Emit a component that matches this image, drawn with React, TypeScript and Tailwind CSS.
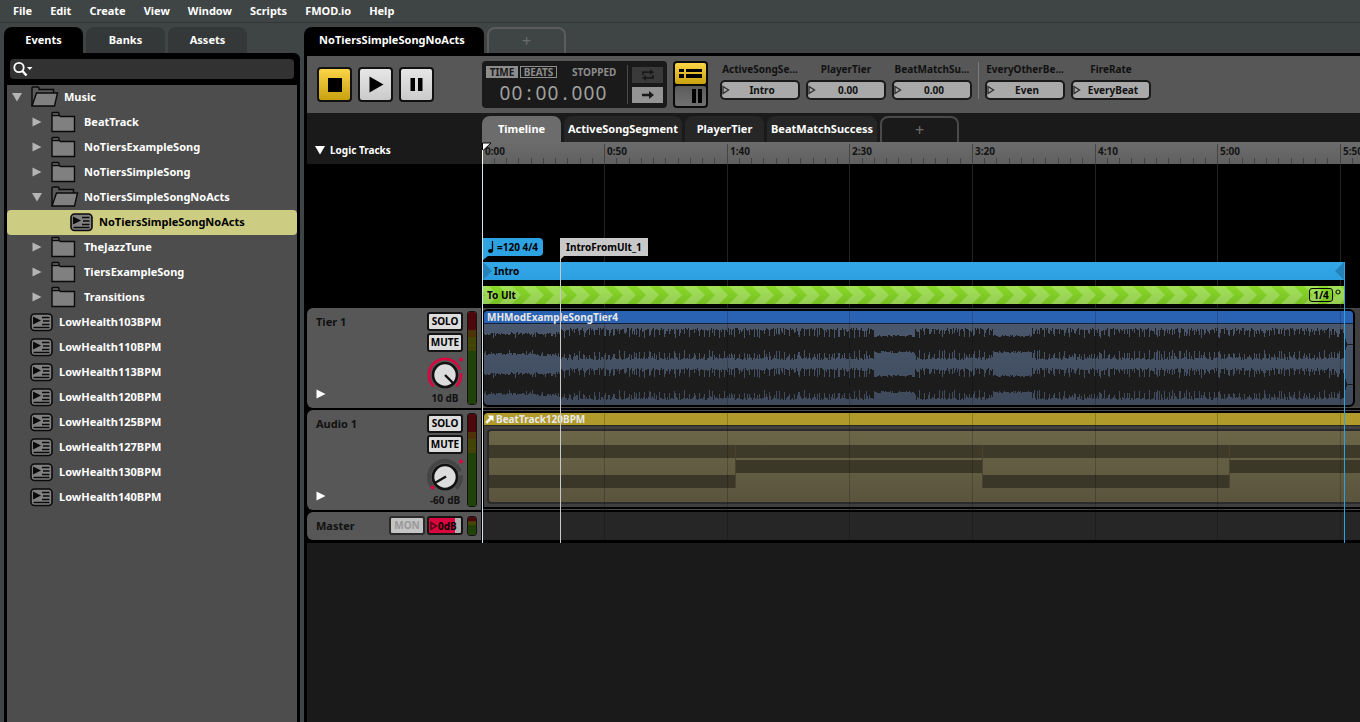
import type { ReactNode } from "react";
import clsx from "clsx";

const MENUS = ["File", "Edit", "Create", "View", "Window", "Scripts", "FMOD.io", "Help"];

type Item = { name: string; kind: "closed" | "open" | "event"; pad: string; selected?: boolean };

const TREE: Item[] = [
  { name: "Music", kind: "open", pad: "pl-1" },
  { name: "BeatTrack", kind: "closed", pad: "pl-6" },
  { name: "NoTiersExampleSong", kind: "closed", pad: "pl-6" },
  { name: "NoTiersSimpleSong", kind: "closed", pad: "pl-6" },
  { name: "NoTiersSimpleSongNoActs", kind: "open", pad: "pl-6" },
  { name: "NoTiersSimpleSongNoActs", kind: "event", pad: "pl-[63px]", selected: true },
  { name: "TheJazzTune", kind: "closed", pad: "pl-6" },
  { name: "TiersExampleSong", kind: "closed", pad: "pl-6" },
  { name: "Transitions", kind: "closed", pad: "pl-6" },
  ...[103, 110, 113, 120, 125, 127, 130, 140].map(
    (bpm): Item => ({ name: `LowHealth${bpm}BPM`, kind: "event", pad: "pl-[23px]" })
  ),
];

// timeline scale
const PX_PER_SEC = 2.452;
const MARKS = [
  { t: 0, label: "0:00" },
  { t: 50, label: "0:50" },
  { t: 100, label: "1:40" },
  { t: 150, label: "2:30" },
  { t: 200, label: "3:20" },
  { t: 250, label: "4:10" },
  { t: 300, label: "5:00" },
  { t: 350, label: "5:50" },
];
const toPx = (t: number) => Math.floor(t * PX_PER_SEC);

function Tri({ dir, className }: { dir: "right" | "down"; className?: string }) {
  return (
    <svg width="10" height="10" viewBox="0 0 10 10" className={clsx("shrink-0", className)} fill="currentColor">
      {dir === "right" ? <path d="M0.5 0.5L9.5 5L0.5 9.5z" /> : <path d="M0 1h10L5 9.5z" />}
    </svg>
  );
}

function FolderClosed() {
  return (
    <svg width="26" height="22" viewBox="0 0 26 22" className="shrink-0">
      <path d="M1 4V2.5Q1 1.5 2 1.5H7Q8 1.5 8 2.5V4" fill="#6b6b6b" stroke="#0a0a0a" strokeWidth="1.4" />
      <path d="M1 4.5H8L9.5 5.5H23.5V20.5H1z" fill="#808080" stroke="#0a0a0a" strokeWidth="1.4" />
    </svg>
  );
}

function FolderOpen() {
  return (
    <svg width="28" height="22" viewBox="0 0 28 22" className="shrink-0">
      <path d="M1 20V2Q1 1 2 1H7Q8 1 8 2V3.5H22.5V7" fill="#5a5a5a" stroke="#0a0a0a" strokeWidth="1.4" />
      <path d="M5.5 7L26.5 7L23.5 20H1z" fill="#808080" stroke="#0a0a0a" strokeWidth="1.4" />
    </svg>
  );
}

function EventIcon() {
  return (
    <svg width="23" height="19" viewBox="0 0 23 19" className="shrink-0">
      <rect x="1" y="1" width="21" height="16.5" rx="3.5" fill="#808080" stroke="#0a0a0a" strokeWidth="1.6" />
      <path d="M3 3.5L11 7.5L3 11.5z" fill="#0a0a0a" />
      <path d="M12 4.5H19.5M13 8H19.5M12 11.5H19.5M3.5 14.5H19.5" stroke="#0a0a0a" strokeWidth="1.3" />
    </svg>
  );
}

function TreeRow({ item }: { item: Item }) {
  const isEvent = item.kind === "event";
  return (
    <li>
      <button
        className={clsx(
          "flex h-[25px] w-full items-center pb-px text-left",
          item.pad,
          item.selected ? "rounded-sm bg-[#cccc83] text-black" : "text-white"
        )}
      >
        {isEvent ? (
          <EventIcon />
        ) : (
          <>
            <Tri dir={item.kind === "open" ? "down" : "right"} className="mr-[9px] ml-px text-[#b4b4b4]" />
            {item.kind === "open" ? <FolderOpen /> : <FolderClosed />}
          </>
        )}
        <span className={clsx(isEvent ? "ml-1.5" : item.kind === "open" ? "ml-[5px]" : "ml-[7px]")}>{item.name}</span>
      </button>
    </li>
  );
}

function Sidebar() {
  return (
    <aside className="flex w-[296px] shrink-0 flex-col">
      <div className="flex gap-[3px]">
        {["Events", "Banks", "Assets"].map((t, i) => (
          <button key={t} className={clsx("h-[26px] w-[79px] rounded-t-lg", i === 0 ? "bg-black" : "bg-[#343838]")}>
            {t}
          </button>
        ))}
      </div>
      <div className="flex min-h-0 flex-1 flex-col rounded-tr-md bg-black px-[3px] pt-1.5">
        <label className="mx-[3px] mb-1.5 flex h-5 items-center rounded-sm bg-[#323232] pl-[3px]">
          <svg width="20" height="16" viewBox="0 0 20 16" className="shrink-0" fill="none" stroke="#fff">
            <circle cx="6" cy="6.5" r="4.7" strokeWidth="1.8" />
            <path d="M9.5 10L13.5 14.5" strokeWidth="2.4" />
            <path d="M14 6h5.5L16.7 9z" fill="#fff" stroke="none" />
          </svg>
          <input aria-label="Search events" className="min-w-0 flex-1 bg-transparent px-1 outline-none" />
        </label>
        <ul className="flex-1 bg-[#4d4d4d]">
          {TREE.map((item, i) => (
            <TreeRow key={i} item={item} />
          ))}
        </ul>
      </div>
    </aside>
  );
}

function TransportButton({ label, active, children }: { label: string; active?: boolean; children: ReactNode }) {
  return (
    <button
      aria-label={label}
      className={clsx(
        "h-[35px] w-[35px] rounded-sm border-2 border-[#111] bg-linear-to-b",
        active ? "from-[#fbd545] to-[#c9a20c]" : "from-[#e6e6e6] to-[#cbcbcb]"
      )}
    >
      <svg viewBox="0 0 31 31" fill="#000">
        {children}
      </svg>
    </button>
  );
}

function Param({ name, value }: { name: string; value: string }) {
  return (
    <label className="flex w-20 flex-col items-center gap-1 text-[10px] leading-[14px] text-[#111]">
      <span className="whitespace-nowrap">{name}</span>
      <span className="flex h-5 w-20 items-center rounded-[5px] border-2 border-[#1a1a1a] bg-[#a9a9a9]">
        <svg width="8" height="10" viewBox="0 0 8 10" className="shrink-0">
          <path d="M1 1.5L6.5 5L1 8.5z" fill="none" stroke="#333" strokeWidth="1.4" />
        </svg>
        <input readOnly value={value} className="w-full min-w-0 bg-transparent pr-1 text-center outline-none" />
      </span>
    </label>
  );
}

function Toolbar() {
  return (
    <div className="flex h-[57px] items-center bg-[#575757] pl-2.5">
      <div className="flex w-[165px] gap-1.5">
        <TransportButton label="Stop" active>
          <rect x="9" y="9" width="14" height="14" />
        </TransportButton>
        <TransportButton label="Play">
          <path d="M9.5 7.5L23.5 15.5L9.5 23.5z" />
        </TransportButton>
        <TransportButton label="Pause">
          <path d="M9.5 9h4.5v13H9.5zM17 9h4.5v13H17z" />
        </TransportButton>
      </div>

      <div className="flex h-[47px] w-[185px] items-center rounded bg-[#1a1a1a] px-1">
        <div className="flex-1">
          <div className="flex items-center gap-0.5 text-[10px] leading-3">
            <button className="h-3 w-8 bg-[#8c8c8c] text-[#1a1a1a]">TIME</button>
            <button className="h-3 w-[37px] border border-[#8c8c8c] leading-[10px] text-[#8c8c8c]">BEATS</button>
            <span className="ml-[13px] text-[#8c8c8c]">STOPPED</span>
          </div>
          <div className="mt-1 ml-[13px] flex text-[19px] leading-[22px] font-normal text-[#a0a0a0]">
            {"00:00.000".split("").map((c, i) => (
              <span key={i} className="w-3 text-center">
                {c}
              </span>
            ))}
          </div>
        </div>
        <div className="ml-1 flex h-[39px] flex-col justify-center gap-1 border-l border-[#4a4a4a] pl-1">
          <button aria-label="Loop" className="flex h-4 w-[31px] items-center justify-center bg-[#3a3a3a]">
            <svg width="14" height="12" viewBox="0 0 14 12" fill="none" stroke="#1a1a1a" strokeWidth="1.8">
              <path d="M2 6V3.2h8M12 6v2.8H4" />
              <path d="M9 0L13 3.2L9 6zM5 6L1 8.8L5 12z" fill="#1a1a1a" stroke="none" />
            </svg>
          </button>
          <button aria-label="Follow cursor" className="flex h-4 w-[31px] items-center justify-center bg-[#949494]">
            <svg width="14" height="10" viewBox="0 0 14 10">
              <path d="M1 3.8h7V1l5 4l-5 4V6.2H1z" fill="#1a1a1a" />
            </svg>
          </button>
        </div>
      </div>

      <div className="ml-1.5 flex h-[47px] w-[35px] flex-col gap-0.5 rounded-sm bg-[#0a0a0a] p-0.5">
        <button aria-label="Track view" className="h-[21px] rounded-[2px] bg-linear-to-b from-[#fbd545] to-[#c9a20c]">
          <svg viewBox="0 0 31 21" fill="#000">
            <path d="M4 6h5v3H4zM11 6h16v3H11zM4 11h5v4H4zM11 11h16v4H11z" />
          </svg>
        </button>
        <button aria-label="Mixer view" className="h-5 rounded-[2px] bg-linear-to-b from-[#5c5c5c] to-[#707070]">
          <svg viewBox="0 0 31 20" fill="#000">
            <path d="M17 3h4v14h-4zM23 3h4v14h-4z" />
          </svg>
        </button>
      </div>

      <div className="ml-3 flex items-center gap-1.5 pb-2">
        <Param name="ActiveSongSe..." value="Intro" />
        <Param name="PlayerTier" value="0.00" />
        <Param name="BeatMatchSu..." value="0.00" />
        <div className="h-[37px] w-px bg-[#7c7c7c]" />
        <Param name="EveryOtherBe..." value="Even" />
        <Param name="FireRate" value="EveryBeat" />
      </div>
    </div>
  );
}

function Ruler() {
  return (
    <div className="relative h-[22px] overflow-hidden bg-linear-to-b from-[#6c6c6c] to-[#606060] text-[10px] text-[#141414]">
      {MARKS.map(({ t, label }) => (
        <div
          key={t}
          className="absolute top-0.5 h-5 border-l border-[#444] pl-0.5 leading-[14px]"
          style={{ left: toPx(t) }}
        >
          {label}
        </div>
      ))}
      {Array.from({ length: 73 }, (_, i) => (
        <div key={i} className="absolute bottom-0 h-1.5 w-px bg-[#444]" style={{ left: toPx(i * 5) }} />
      ))}
    </div>
  );
}

function GridLines({ className }: { className: string }) {
  return (
    <div className="pointer-events-none absolute inset-0 overflow-hidden">
      {MARKS.slice(1).map(({ t }) => (
        <div key={t} className={clsx("absolute top-0 h-full w-px", className)} style={{ left: toPx(t) }} />
      ))}
    </div>
  );
}

function LogicTracks() {
  return (
    <div className="relative flex-1 overflow-hidden bg-black pt-[74px] pb-1 text-[10px] leading-[18px] text-black">
      <GridLines className="bg-[#222]" />
      <div className="relative flex h-[18px] pl-px">
        <div className="relative flex h-[18px] w-[60px] items-center gap-[3px] rounded-r-sm bg-[#2ea3e3] pl-1">
          <svg width="7" height="14" viewBox="0 0 7 14">
            <path d="M5.5 1v9.5" stroke="#000" strokeWidth="1.3" />
            <ellipse cx="3.5" cy="11" rx="2.5" ry="2" />
          </svg>
          <span className="whitespace-nowrap">=120 4/4</span>
          <svg width="5" height="5" className="absolute top-[18px] left-0" fill="#2ea3e3">
            <path d="M0 0h5L0 4z" />
          </svg>
        </div>
        <div className="relative ml-[17px] h-[18px] bg-[#c8c8c8] px-1.5">
          IntroFromUlt_1
          <svg width="4" height="4" className="absolute top-[18px] left-0" fill="#c8c8c8">
            <path d="M0 0h4L0 4z" />
          </svg>
        </div>
      </div>
      <div className="relative mt-1.5 ml-px flex h-[18px] w-[861px] items-center justify-between bg-linear-to-b from-[#33a8e8] to-[#2b9fdf]">
        <svg width="9" height="18" fill="#2582b8">
          <path d="M0 0l9 9l-9 9z" />
        </svg>
        <span className="ml-0.5 flex-1">Intro</span>
        <svg width="9" height="18" fill="#2582b8">
          <path d="M9 0L0 9l9 9z" />
        </svg>
      </div>
      <div className="relative mt-1.5 ml-px flex h-[18px] w-[861px] items-center">
        <svg className="absolute inset-0 h-full w-full">
          <defs>
            <linearGradient id="lime" x1="0" y1="0" x2="0" y2="1">
              <stop offset="0" stopColor="#88d928" />
              <stop offset="1" stopColor="#78be24" />
            </linearGradient>
            <pattern id="chevron" width="23" height="18" patternUnits="userSpaceOnUse" x="16">
              <path d="M0 0h13l9 9l-9 9H0l9-9z" fill="#fff" opacity="0.22" />
            </pattern>
          </defs>
          <rect width="100%" height="100%" fill="url(#lime)" />
          <rect width="100%" height="100%" fill="url(#chevron)" />
        </svg>
        <span className="relative ml-1 flex-1">To Ult</span>
        <span className="relative flex h-3.5 w-6 items-center justify-center rounded-[3px] border border-black">1/4</span>
        <svg width="6" height="6" className="relative mr-[3px] mb-1.5 ml-0.5">
          <circle cx="3" cy="3" r="2" fill="none" stroke="#1c2c08" strokeWidth="1.2" />
        </svg>
      </div>
    </div>
  );
}

// fixed-seed noise so the peaks stay the same on each render
function noise(seed: number) {
  const v = Math.sin(seed * 12.9898) * 43758.5453;
  return v - Math.floor(v);
}

function bandPath(center: number, seed: number) {
  const top: string[] = [];
  const bottom: string[] = [];
  for (let x = 0; x < 861; x++) {
    const quiet = (x > 389 && x < 430) || (x > 508 && x < 548);
    const intro = x < 77;
    const edge = (s: number) => {
      if (quiet) return 7 + noise(x + s) * 2;
      if (intro) return 8 + x / 40 + noise(x + s) * 3 - (noise(x * 3 + s) > 0.85 ? 3 : 0);
      const beat = x % 5 === 0 || noise(x * 2 + 5) > 0.93;
      return beat ? 6 + noise(x * 7 + s) * 5 : 13 + noise(x + s) * 3 - (noise(x * 5 + s) > 0.9 ? 3 : 0);
    };
    const up = Math.round(edge(seed));
    const down = Math.round(edge(seed + 31));
    top.push(`L${x} ${center - up}H${x + 1}`);
    bottom.unshift(`L${x + 1} ${center + down}H${x}`);
  }
  return `M0 ${center}${top.join("")}${bottom.join("")}z`;
}

function Waveform() {
  return (
    <svg width="869" height="81" shapeRendering="crispEdges" fill="#1c1c1c" className="block">
      <path d={bandPath(20, 3)} />
      <path d={bandPath(60, 3)} />
      <path d="M861 15h1v3h1v2h6v1h-6v2h-1v3h-1zM861 55h1v3h1v2h6v1h-6v2h-1v3h-1z" />
    </svg>
  );
}

function TrackButton({ children, dim }: { children: string; dim?: boolean }) {
  return (
    <button
      className={clsx(
        "h-[19px] w-9 rounded-[3px] border-2 text-[10px] leading-[15px]",
        dim ? "border-[#2a2a2a] bg-[#c4c4c4] text-[#999]" : "border-[#141414] bg-[#dcdcdc] text-black"
      )}
    >
      {children}
    </button>
  );
}

function Knob({ low }: { low?: boolean }) {
  const ring = "M6.7 30.3A16 16 0 1 1 33 13.5M33.8 17.2A16 16 0 0 1 29.3 30.3";
  return (
    <svg width="36" height="37" viewBox="0 0 36 37" fill="none">
      <path d={ring} stroke={low ? "#454545" : "#d9063f"} strokeWidth={low ? 4 : 2.8} />
      {low && <circle cx="5.5" cy="29.5" r="2" fill="#d9063f" />}
      <circle cx="34" cy="3.5" r="2" fill="#d9063f" />
      <circle cx="18" cy="19" r="12" fill="#dcdcdc" stroke="#111" strokeWidth="2.6" />
      <path d={low ? "M19 18.5L7 25.5" : "M18 19L27 28"} stroke="#111" strokeWidth="2.4" />
    </svg>
  );
}

function Meter() {
  return (
    <div className="flex w-2.5 flex-col overflow-hidden rounded-[3px] border border-[#141414]">
      <div className="grow-[18] bg-[#4c080a]" />
      <div className="grow-[7] bg-[#4e3208]" />
      <div className="grow-[14] bg-[#434508]" />
      <div className="grow-[53] bg-[#1f4208]" />
    </div>
  );
}

function TrackHeader({ name, volume, low }: { name: string; volume: string; low?: boolean }) {
  return (
    <div className="mr-px flex h-[100px] w-[174px] rounded-l-md bg-[#575757] py-[3px] pr-1 pl-[9px] text-[#111]">
      <div className="flex flex-1 flex-col justify-between pt-px pb-0.5">
        <span className="leading-5">{name}</span>
        <button aria-label={`Expand ${name}`} className="mb-1 text-white">
          <Tri dir="right" />
        </button>
      </div>
      <div className="mr-1 flex w-9 flex-col items-center pt-px text-[10px]">
        <TrackButton>SOLO</TrackButton>
        <div className="mt-0.5">
          <TrackButton>MUTE</TrackButton>
        </div>
        <div className="mt-1">
          <Knob low={low} />
        </div>
        <span className="leading-[10px] whitespace-nowrap">{volume}</span>
      </div>
      <Meter />
    </div>
  );
}

function BeatTrackLane() {
  return (
    <div className="h-[100px] min-w-0 flex-1 overflow-hidden border-y border-[#4a4a4a] bg-black">
      <div className="mt-0.5 ml-0.5 flex h-[13px] items-center gap-0.5 rounded-tl border-b border-[#2a2618] bg-[#b09a2c] pl-px text-[10px] leading-3 text-[#e8e8e8]">
        <svg width="9" height="9" viewBox="0 0 9 9" fill="#fff">
          <path d="M2.5 0.5H8.5V6.5L6.5 4.5L2.2 8.8L0.3 6.9L4.6 2.5z" />
        </svg>
        BeatTrack120BPM
      </div>
      <div className="ml-0.5 h-[81px] bg-[#404040] pt-[3px] pl-[3px]">
        <div className="flex h-[75px] overflow-hidden rounded-l border-2 border-r-0 border-[#2b2b2b] bg-linear-to-b from-[#6b6648] to-[#5a543d] pt-3.5">
          {[0, 1, 2, 3].map((i) => (
            <div key={i} className="h-[43px] w-[247px] shrink-0 border-r border-[#48442f]">
              <div className="h-[13px] bg-[#3d3a29]" />
              <div className={clsx("mt-[2px] h-[13px]", i % 2 === 1 && "bg-[#3b3828]")} />
              <div className={clsx("mt-[2px] h-[13px]", i % 2 === 0 && "bg-[#3a3628]")} />
            </div>
          ))}
        </div>
      </div>
    </div>
  );
}

function Tracks() {
  return (
    <div className="flex flex-col gap-0.5 bg-black pb-[3px]">
      <div className="flex">
        <TrackHeader name="Tier 1" volume="10 dB" />
        <div className="h-[100px] min-w-0 flex-1 overflow-hidden border-y border-[#4a4a4a] bg-[#404040]">
          <div className="h-[98px] w-[873px] rounded-md border-2 border-black bg-linear-to-b from-[#4c5a70] to-[#3e495b]">
            <div className="h-[13px] rounded-t border-b border-[#15203a] bg-[#2a63b4] pl-[3px] text-[10px] leading-3 text-[#e8e8e8]">
              MHModExampleSongTier4
            </div>
            <Waveform />
          </div>
        </div>
      </div>
      <div className="flex">
        <TrackHeader name="Audio 1" volume="-60 dB" low />
        <BeatTrackLane />
      </div>
      <div className="flex h-7">
        <div className="mr-px flex w-[174px] items-stretch rounded-l-md bg-[#575757] py-1 pr-1 pl-[9px] text-[#111]">
          <span className="flex-1 leading-5">Master</span>
          <TrackButton dim>MON</TrackButton>
          <button className="mr-1 ml-0.5 flex h-[19px] w-9 items-center rounded-[3px] border-2 border-[#141414] bg-linear-to-r from-[#d9063f] from-80% to-[#b0b0b0] to-80% pl-px text-[10px] text-black">
            <svg width="8" height="10" viewBox="0 0 8 10" className="shrink-0">
              <path d="M1 1.5L6.5 5L1 8.5z" fill="none" stroke="#5a0a1c" strokeWidth="1.5" />
            </svg>
            0dB
          </button>
          <Meter />
        </div>
        <div className="flex-1 bg-[#262626]" />
      </div>
    </div>
  );
}

function AddTab({ className }: { className?: string }) {
  return (
    <button
      aria-label="Add"
      className={clsx(
        "h-[26px] w-[79px] rounded-t-lg border-2 border-b-0 text-base leading-6 font-normal text-[#6c6c6c]",
        className
      )}
    >
      +
    </button>
  );
}

function Timeline() {
  return (
    <div className="flex-1 bg-[#1a1a1a]">
      <div className="flex h-[51px]">
        <button className="mt-auto mb-1 flex w-[175px] items-center gap-[5px] pl-2 text-[10px] leading-5">
          <Tri dir="down" />
          Logic Tracks
        </button>
        <div className="min-w-0 flex-1 pt-[3px]">
          <div className="flex gap-[3px]">
            {["Timeline", "ActiveSongSegment", "PlayerTier", "BeatMatchSuccess"].map((t, i) => (
              <button
                key={t}
                className={clsx(
                  "h-[26px] min-w-[79px] rounded-t-lg px-1",
                  i === 0 ? "bg-[#6c6c6c]" : "bg-[#262626]"
                )}
              >
                {t}
              </button>
            ))}
            <AddTab className="border-[#4a4a4a]" />
          </div>
          <Ruler />
        </div>
      </div>
      <div className="relative">
        <div className="flex">
          <div className="w-[175px] shrink-0 bg-black" />
          <LogicTracks />
        </div>
        <Tracks />
        {/* cursor, marker and loop end lines */}
        <div className="pointer-events-none absolute inset-y-0 right-0 left-[175px] overflow-hidden">
          <div className="absolute inset-x-0 top-36 bottom-0">
            <GridLines className="bg-black/20" />
          </div>
          <div className="absolute top-0 left-0 h-full w-px bg-[#d8e4ec]" />
          <div className="absolute top-[74px] bottom-0 left-[78px] w-px bg-[#c8c8c8]" />
          <div className="absolute top-[98px] bottom-0 left-[862px] w-px bg-[#2ea3e3]" />
        </div>
        <svg width="12" height="22" className="absolute bottom-full left-[174px]">
          <path d="M1.5 1H10L1.5 9z" fill="#fff" stroke="#000" />
          <path d="M1.5 8V22" stroke="#fff" />
        </svg>
      </div>
    </div>
  );
}

export default function App() {
  return (
    <div className="flex h-screen flex-col overflow-hidden bg-[#3f4444] font-['Noto_Sans',sans-serif] text-[11px] leading-4 font-bold text-white">
      <nav className="flex h-[23px] shrink-0 items-center gap-[18px] border-b border-[#323636] pl-[13px]">
        {MENUS.map((m) => (
          <button key={m}>{m}</button>
        ))}
      </nav>
      <div className="flex min-h-0 flex-1 gap-1 pt-1 pl-1">
        <Sidebar />
        <main className="flex min-w-0 flex-1 flex-col">
          <div className="flex gap-[3px]">
            <button className="h-[26px] w-[180px] rounded-t-lg bg-black pr-1">NoTiersSimpleSongNoActs</button>
            <AddTab className="border-[#5c5c5c]" />
          </div>
          <div className="flex min-h-0 flex-1 flex-col bg-black pt-[3px] pl-[3px]">
            <Toolbar />
            <Timeline />
          </div>
        </main>
      </div>
    </div>
  );
}
